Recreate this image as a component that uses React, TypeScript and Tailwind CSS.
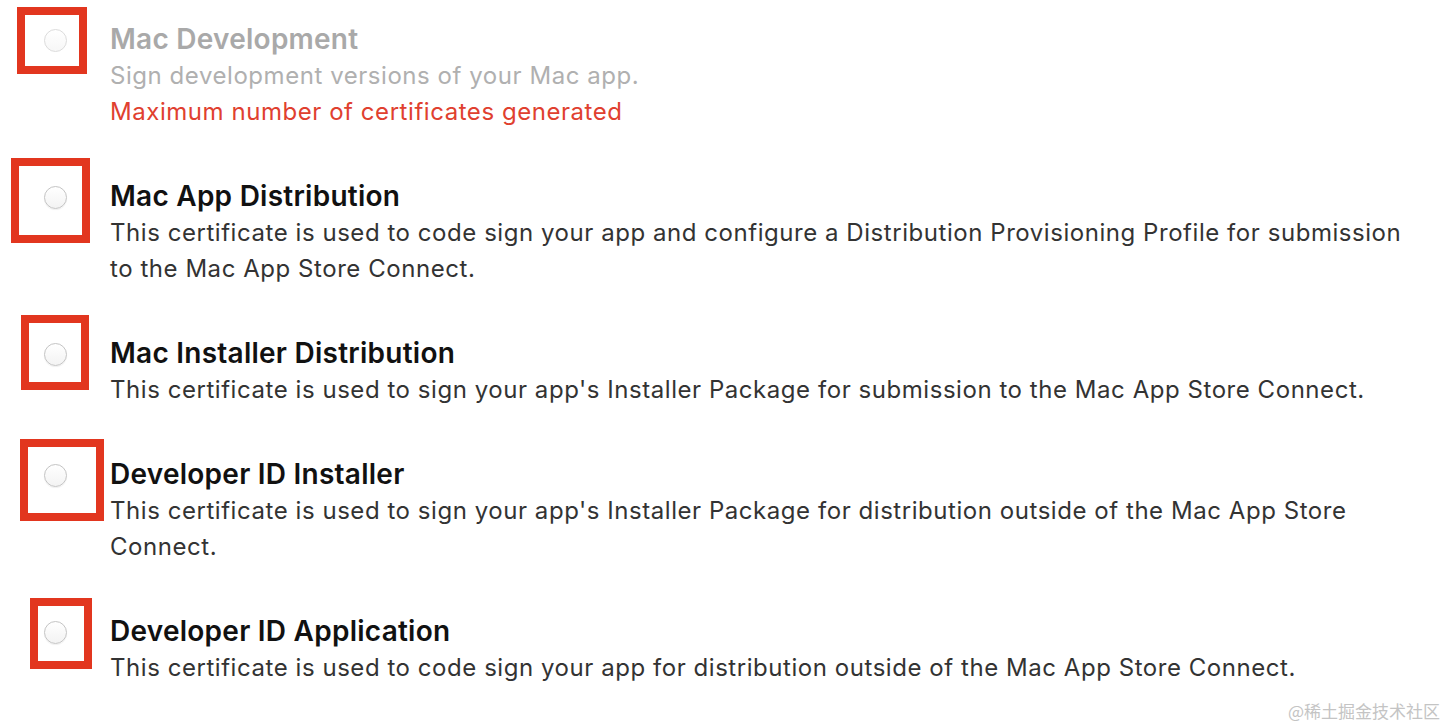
import React from "react";

type Item = {
  title: string;
  lines: string;
  error?: string;
  disabled?: boolean;
  box: string;
};

const items: Item[] = [
  {
    title: "Mac Development",
    lines: "Sign development versions of your Mac app.",
    error: "Maximum number of certificates generated",
    disabled: true,
    box: "left-[17px] top-[-14px] w-[70px] h-[67px]",
  },
  {
    title: "Mac App Distribution",
    lines:
      "This certificate is used to code sign your app and configure a Distribution Provisioning Profile for submission to the Mac App Store Connect.",
    box: "left-[11px] top-[-20px] w-[79px] h-[85px]",
  },
  {
    title: "Mac Installer Distribution",
    lines:
      "This certificate is used to sign your app's Installer Package for submission to the Mac App Store Connect.",
    box: "left-[21px] top-[-20px] w-[68px] h-[75px]",
  },
  {
    title: "Developer ID Installer",
    lines:
      "This certificate is used to sign your app's Installer Package for distribution outside of the Mac App Store Connect.",
    box: "left-[20px] top-[-17px] w-[84px] h-[82px]",
  },
  {
    title: "Developer ID Application",
    lines:
      "This certificate is used to code sign your app for distribution outside of the Mac App Store Connect.",
    box: "left-[30px] top-[-15px] w-[62px] h-[71px]",
  },
];

function Radio({ disabled }: { disabled?: boolean }) {
  return (
    <div
      className={
        disabled
          ? "w-[23px] h-[23px] rounded-full border border-[#dcdcdc] bg-gradient-to-b from-white to-[#f7f7f7]"
          : "w-[23px] h-[23px] rounded-full border border-[#c4c4c4] bg-gradient-to-b from-white to-[#f3f3f3] shadow-[0_1px_1px_rgba(0,0,0,0.06)]"
      }
    />
  );
}

export default function App() {
  return (
    <div
      className="relative min-h-[728px] w-full bg-white pt-[21px]"
      style={{ fontFamily: "Inter, 'Noto Sans', 'Liberation Sans', sans-serif" }}
    >
      <div className="flex flex-col gap-[48px]">
        {items.map((it) => (
          <div key={it.title} className="relative flex">
            <div className="w-[110px] shrink-0 h-[37px] flex items-center justify-center pl-[1px] pt-[2px]">
              <Radio disabled={it.disabled} />
            </div>
            <div
              className={`pointer-events-none absolute border-[8px] border-[#e2361f] ${it.box}`}
            />
            <div className="w-[1312px]">
              <div
                className={`text-[28px] leading-[37px] font-semibold tracking-[0.25px] ${
                  it.disabled ? "text-[#a9a9a9]" : "text-[#111111]"
                }`}
              >
                {it.title}
              </div>
              <div
                className={`text-[24px] leading-[36px] tracking-[0.55px] ${
                  it.disabled ? "text-[#b0b0b0]" : "text-[#333333]"
                }`}
              >
                {it.lines}
              </div>
              {it.error && (
                <div className="text-[24px] leading-[36px] tracking-[0.55px] text-[#e0402f]">
                  {it.error}
                </div>
              )}
            </div>
          </div>
        ))}
      </div>
      <div
        className="absolute right-[9px] bottom-[6px] text-[17px] leading-[22px] text-[#c4c4c4]"
        style={{ fontFamily: "'Noto Sans CJK SC', 'Noto Sans', sans-serif" }}
      >
        @稀土掘金技术社区
      </div>
    </div>
  );
}
